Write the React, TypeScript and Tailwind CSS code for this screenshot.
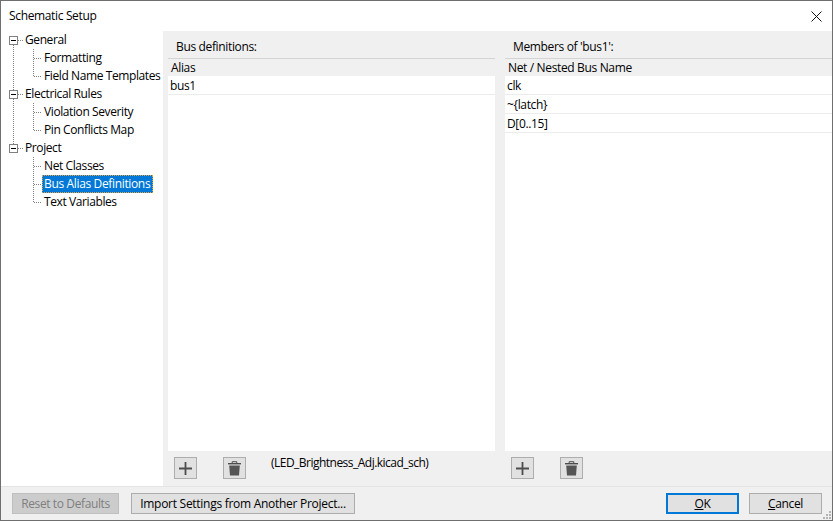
// App.tsx
// KiCad "Schematic Setup" dialog, bus alias page
const font = { fontFamily: '"Open Sans", "Noto Sans", sans-serif' };

type TreeItem = { label: string; kind: "parent" | "child"; last?: boolean; selected?: boolean; cont?: boolean };

const tree: TreeItem[] = [
    { label: "General", kind: "parent", cont: true },
    { label: "Formatting", kind: "child", cont: true },
    { label: "Field Name Templates", kind: "child", cont: true, last: true },
    { label: "Electrical Rules", kind: "parent", cont: true },
    { label: "Violation Severity", kind: "child", cont: true },
    { label: "Pin Conflicts Map", kind: "child", cont: true, last: true },
    { label: "Project", kind: "parent" },
    { label: "Net Classes", kind: "child" },
    { label: "Bus Alias Definitions", kind: "child", selected: true },
    { label: "Text Variables", kind: "child", last: true },
];

const dots = { stroke: "#808080", strokeWidth: 1, strokeDasharray: "1 1", shapeRendering: "crispEdges" as const };

function Gutter({ item }: { item: TreeItem }) {
    if (item.kind === "parent") {
        return (
            <svg width="24" height="18" className="shrink-0">
                <line x1="16.5" y1="9.5" x2="23" y2="9.5" {...dots} />
                {item.label !== "General" && <line x1="12.5" y1="0" x2="12.5" y2="5" {...dots} />}
                {item.cont && <line x1="12.5" y1="14" x2="12.5" y2="18" {...dots} />}
                <rect x="8.5" y="5.5" width="8" height="8" fill="#fff" stroke="#808080" shapeRendering="crispEdges" />
                <line x1="10" y1="9.5" x2="15" y2="9.5" stroke="#000" shapeRendering="crispEdges" />
            </svg>
        );
    }
    return (
        <svg width="41" height="18" className="shrink-0">
            {item.cont && <line x1="12.5" y1="0" x2="12.5" y2="18" {...dots} />}
            <line x1="32.5" y1="0" x2="32.5" y2={item.last ? 9 : 18} {...dots} />
            <line x1="32.5" y1="9.5" x2="41" y2="9.5" {...dots} />
        </svg>
    );
}

function TreeRow({ item }: { item: TreeItem }) {
    return (
        <div className="flex h-[18px] items-center">
            <Gutter item={item} />
            {item.selected ? (
                <span className="flex h-[18px] w-[111px] items-center border border-dotted border-[#e8a33d] bg-[#0078d7] pl-px text-white">
                    {item.label}
                </span>
            ) : (
                <span className={item.kind === "child" ? "pl-[2px] tracking-[-0.4px]" : "tracking-[-0.4px]"}>{item.label}</span>
            )}
        </div>
    );
}

function PlusIcon() {
    return (
        <svg width="13" height="13" viewBox="0 0 13 13">
            <path d="M6.5 0v13M0 6.5h13" stroke="#4d4d4d" strokeWidth="1.8" />
        </svg>
    );
}

function TrashIcon() {
    return (
        <svg width="13" height="15" viewBox="0 0 13 15">
            <path d="M0 2h13v1.4H0z" fill="#4d4d4d" />
            <path d="M4.2 2.2V0.7h4.6v1.5" fill="none" stroke="#4d4d4d" />
            <path d="M1.2 4.4h10.6l-0.8 10.1H2z" fill="#555555" />
        </svg>
    );
}

function IconButton({ children }: { children: React.ReactNode }) {
    return (
        <div className="flex h-[22px] w-[23px] shrink-0 items-center justify-center border border-[#adadad] bg-[#e1e1e1]">
            {children}
        </div>
    );
}

function Grid({ header, rows }: { header: string; rows: string[] }) {
    return (
        <div className="flex h-[393px] flex-col border-t border-[#d4d4d4] bg-white">
            <div className="flex h-[17px] shrink-0 items-center bg-[#f0f0f0] pl-[3px]">{header}</div>
            {rows.map((r) => (
                <div key={r} className="flex h-[19px] shrink-0 items-center border-b border-[#ececec] pt-[2px] pl-[2px]">
                    {r}
                </div>
            ))}
        </div>
    );
}

function Button({ children, className }: { children: React.ReactNode; className: string }) {
    return <div className={`flex h-[21px] items-center justify-center border ${className}`}>{children}</div>;
}

export default function App() {
    return (
        <div
            style={font}
            className="flex h-[521px] w-[833px] flex-col border border-[#6f6f6f] bg-white text-[12px] tracking-[-0.35px] text-black"
        >
            <div className="flex h-[30px] shrink-0 items-center justify-between pr-[10px] pl-2">
                <span>Schematic Setup</span>
                <svg width="11" height="11" viewBox="0 0 11 11">
                    <path d="M0.5 0.5l10 10M10.5 0.5l-10 10" stroke="#111" strokeWidth="1" />
                </svg>
            </div>

            <div className="flex min-h-0 flex-1">
                <div className="w-[162px] shrink-0 whitespace-nowrap">
                    {tree.map((t) => (
                        <TreeRow key={t.label} item={t} />
                    ))}
                </div>
                <div className="flex flex-1 gap-[10px] bg-[#f0f0f0] pl-[5px]">
                    <div className="w-[327px] shrink-0">
                        <div className="flex h-[27px] items-center pt-[5px] pl-2">Bus definitions:</div>
                        <Grid header="Alias" rows={["bus1"]} />
                        <div className="flex items-start pt-[6px] pl-[6px]">
                            <IconButton>
                                <PlusIcon />
                            </IconButton>
                            <div className="ml-[26px]">
                                <IconButton>
                                    <TrashIcon />
                                </IconButton>
                            </div>
                            <span className="ml-[25px] leading-[12px] tracking-[-0.52px]">(LED_Brightness_Adj.kicad_sch)</span>
                        </div>
                    </div>
                    <div className="min-w-0 flex-1">
                        <div className="flex h-[27px] items-center pt-[5px] pl-2">Members of 'bus1':</div>
                        <Grid header="Net / Nested Bus Name" rows={["clk", "~{latch}", "D[0..15]"]} />
                        <div className="flex items-start pt-[6px] pl-[6px]">
                            <IconButton>
                                <PlusIcon />
                            </IconButton>
                            <div className="ml-[26px]">
                                <IconButton>
                                    <TrashIcon />
                                </IconButton>
                            </div>
                        </div>
                    </div>
                </div>
            </div>

            <div className="relative flex h-[34px] shrink-0 items-start border-t border-[#e4e4e4] bg-[#f0f0f0] pt-[6px] pl-[11px]">
                <Button className="w-[107px] border-[#bfbfbf] bg-[#cccccc] text-[#7f7f7f] tracking-[-0.38px]">Reset to Defaults</Button>
                <Button className="ml-3 w-[224px] border-[#adadad] bg-[#e1e1e1] tracking-[-0.28px]">
                    Import Settings from Another Project...
                </Button>
                <Button className="ml-[311px] w-[73px] border-2 border-[#0078d7] bg-[#e1e1e1]">
                    <span>
                        <span className="underline">O</span>K
                    </span>
                </Button>
                <Button className="ml-[10px] w-[73px] border-[#adadad] bg-[#e1e1e1]">
                    <span>
                        <span className="underline">C</span>ancel
                    </span>
                </Button>
                <svg width="10" height="10" className="absolute right-0 bottom-0">
                    <path d="M7 1h2v2H7zM4 4h2v2H4zM7 4h2v2H7zM1 7h2v2H1zM4 7h2v2H4zM7 7h2v2H7z" fill="#b5b5b5" />
                </svg>
            </div>
        </div>
    );
}
